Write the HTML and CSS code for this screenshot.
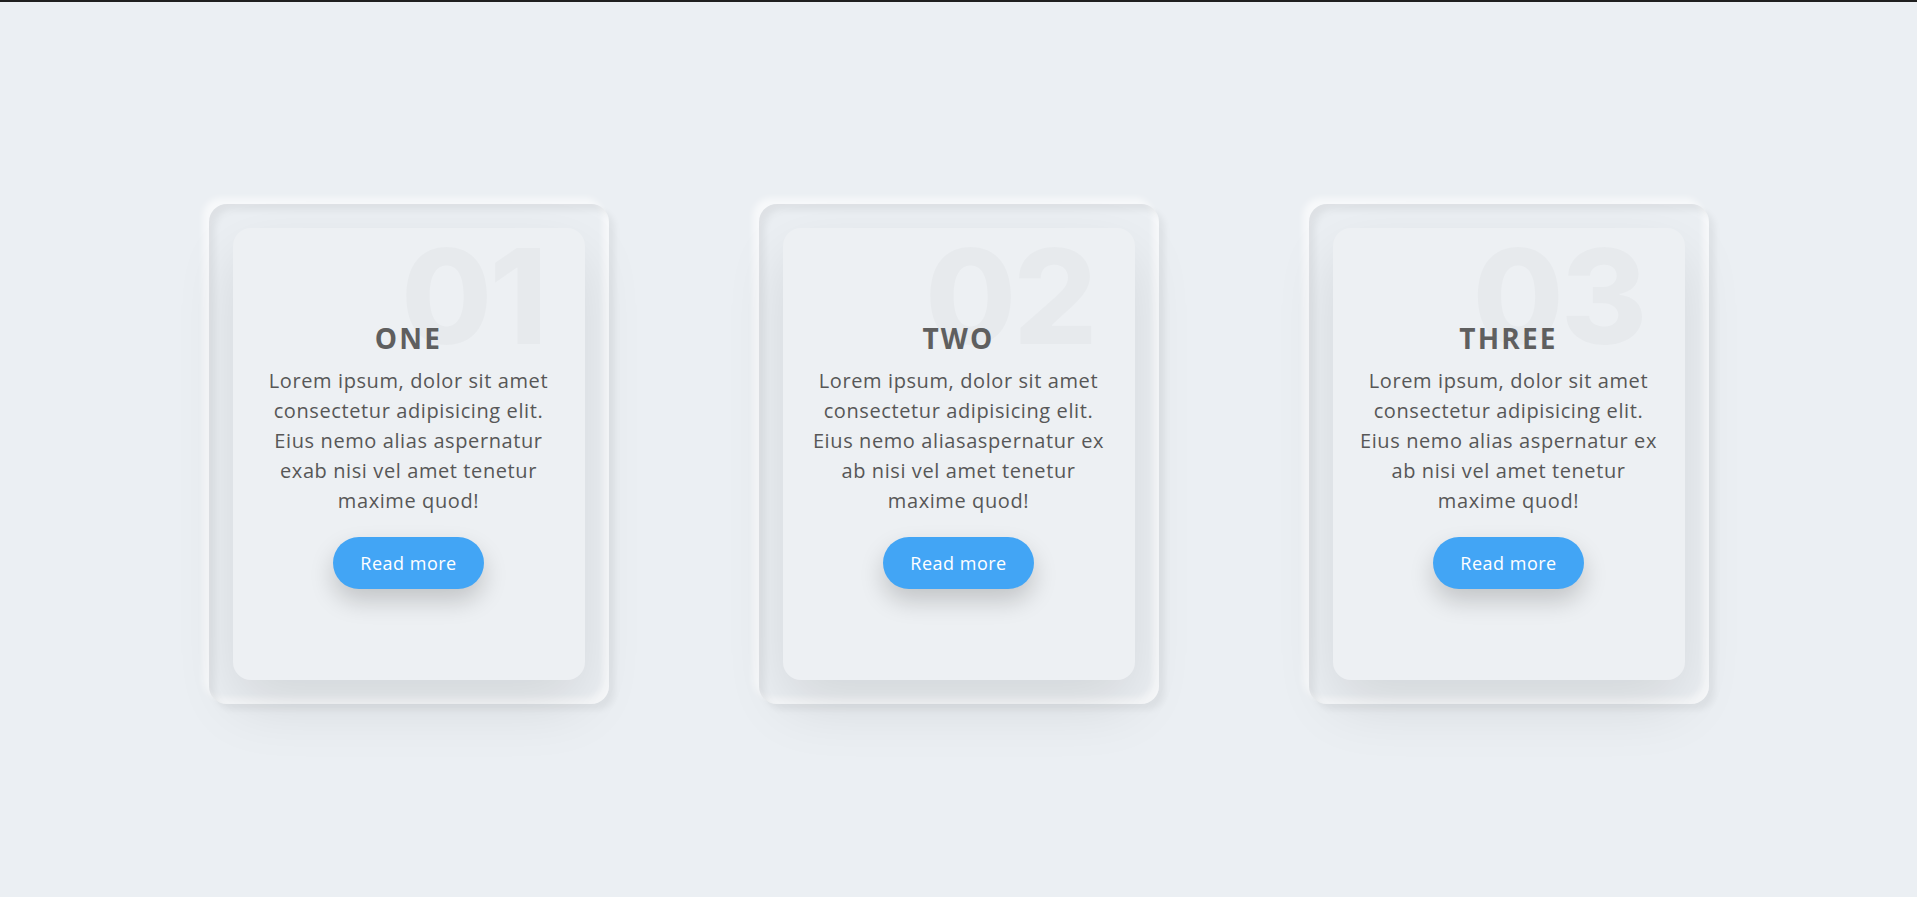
FILE: index.html
```html
<!DOCTYPE html>
<html lang="en">
<head>
<meta charset="utf-8">
<title>Neumorphism Cards</title>
<link rel="stylesheet" href="styles.css">
</head>
<body>
  <main class="container">
    <div class="card">
      <div class="box">
        <span class="num">01</span>
        <div class="content">
          <h3 class="title">ONE</h3>
          <p class="text">Lorem ipsum, dolor sit amet consectetur adipisicing elit. Eius nemo alias aspernatur exab nisi vel amet tenetur maxime quod!</p>
          <a class="btn" href="#">Read more</a>
        </div>
      </div>
    </div>
    <div class="card">
      <div class="box">
        <span class="num">02</span>
        <div class="content">
          <h3 class="title">TWO</h3>
          <p class="text">Lorem ipsum, dolor sit amet consectetur adipisicing elit. Eius nemo aliasaspernatur ex ab nisi vel amet tenetur maxime quod!</p>
          <a class="btn" href="#">Read more</a>
        </div>
      </div>
    </div>
    <div class="card">
      <div class="box">
        <span class="num">03</span>
        <div class="content">
          <h3 class="title">THREE</h3>
          <p class="text">Lorem ipsum, dolor sit amet consectetur adipisicing elit. Eius nemo alias aspernatur ex ab nisi vel amet tenetur maxime quod!</p>
          <a class="btn" href="#">Read more</a>
        </div>
      </div>
    </div>
  </main>
</body>
</html>
```
FILE: styles.css
```css
* {
  box-sizing: border-box;
}

html, body {
  margin: 0;
  padding: 0;
}

body {
  min-height: 100vh;
  background: #ebeff3;
  border-top: 2px solid #1f1f1f;
  padding-top: 8px;
  font-family: "Open Sans", "Noto Sans", sans-serif;
  display: flex;
  align-items: center;
  justify-content: center;
}

.container {
  display: flex;
  gap: 150px;
}

.card {
  width: 400px;
  height: 500px;
  padding: 24px;
  border-radius: 18px;
  box-shadow:
    inset 6px 6px 7px rgba(0, 0, 0, 0.06),
    inset -6px -6px 6px rgba(255, 255, 255, 0.6),
    6px 6px 6px rgba(0, 0, 0, 0.05),
    -6px -6px 6px rgba(255, 255, 255, 0.6);
}

.box {
  position: relative;
  height: 100%;
  border-radius: 18px;
  background: #edf0f3;
  box-shadow: 0 25px 60px rgba(0, 0, 0, 0.1);
  display: flex;
  align-items: center;
  justify-content: center;
  padding: 2px 20px 0;
}

.num {
  position: absolute;
  top: 2px;
  right: 40px;
  font-family: "Inter", "Open Sans", sans-serif;
  font-size: 132px;
  font-weight: 800;
  line-height: 1;
  letter-spacing: -3px;
  color: rgba(0, 0, 0, 0.025);
  pointer-events: none;
}

.content {
  position: relative;
  display: flex;
  flex-direction: column;
  align-items: center;
  text-align: center;
}

.title {
  margin: 0;
  font-size: 28px;
  font-weight: 700;
  letter-spacing: 2.2px;
  line-height: 34px;
  color: #5f5f5f;
}

.text {
  margin: 11px 0 0;
  font-size: 20px;
  line-height: 30px;
  letter-spacing: 0.6px;
  color: #575757;
}

.btn {
  margin-top: 21px;
  display: inline-flex;
  align-items: center;
  justify-content: center;
  width: 151px;
  height: 52px;
  border-radius: 26px;
  background: #42a5f5;
  color: #fff;
  font-size: 18px;
  letter-spacing: 0.5px;
  text-decoration: none;
  box-shadow: 0 12px 24px rgba(0, 0, 0, 0.18);
}
```
